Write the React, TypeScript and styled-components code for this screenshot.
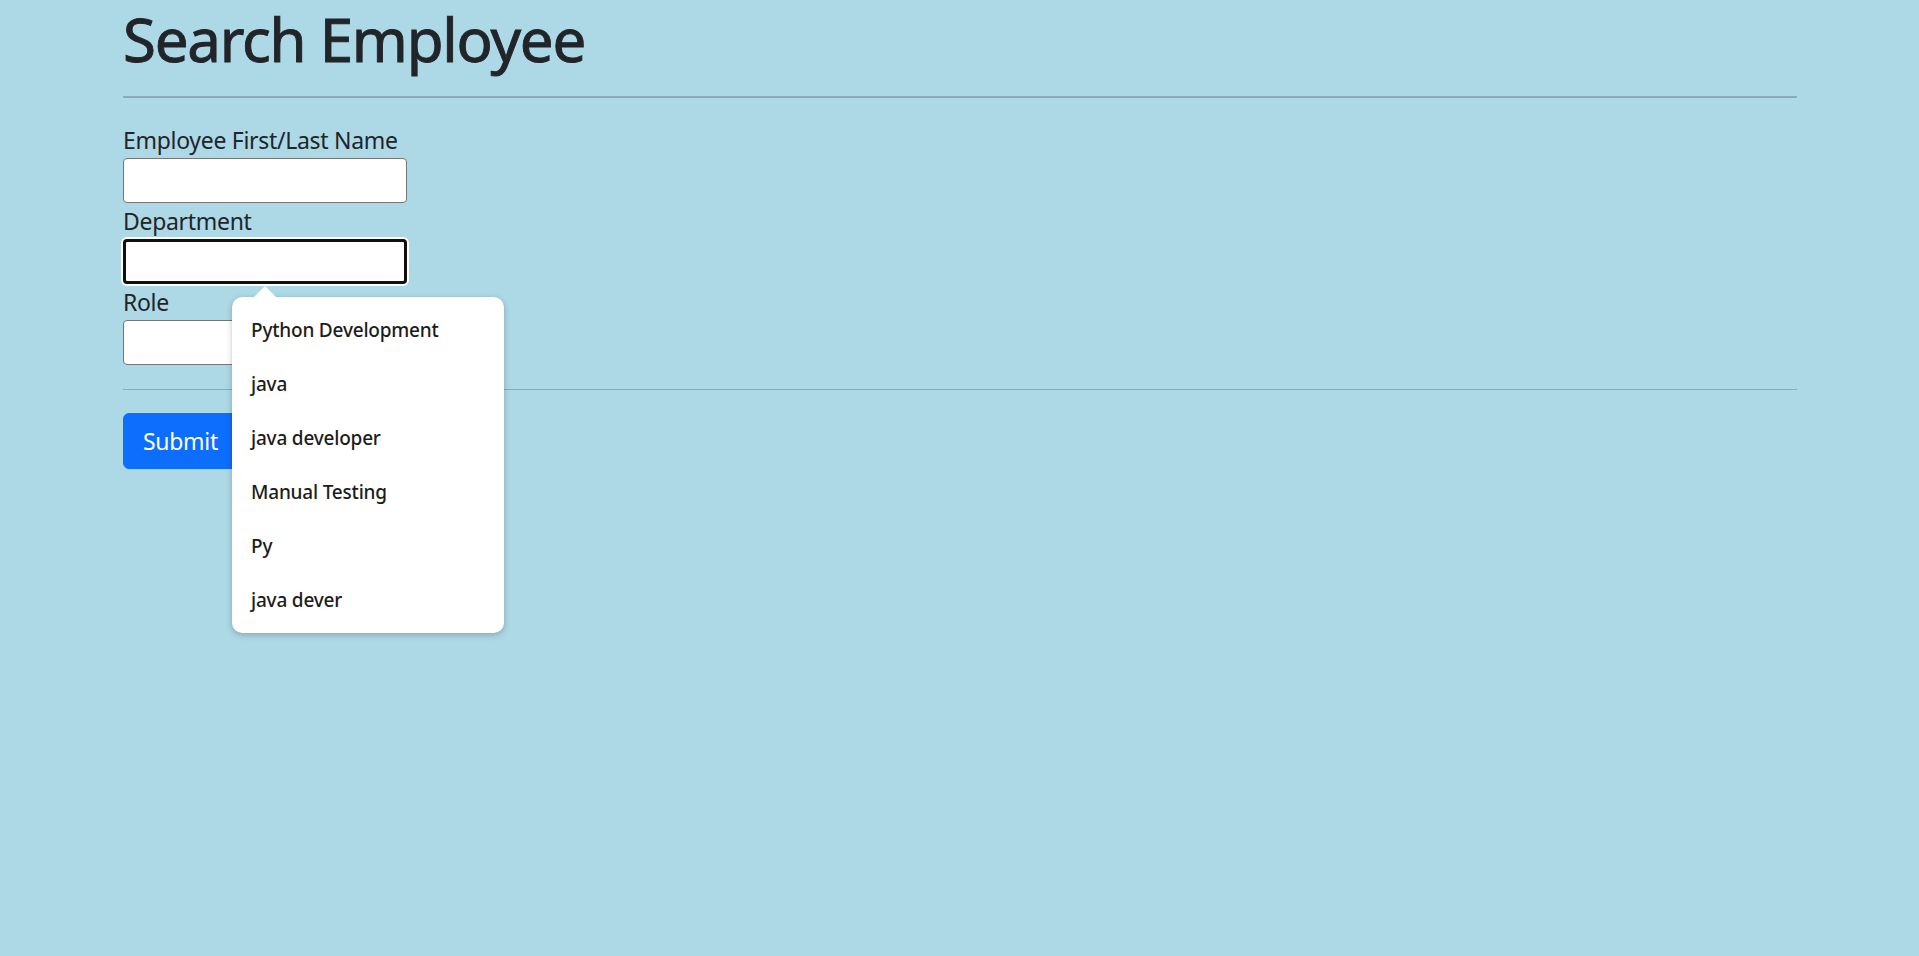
import React from "react";
import styled, { createGlobalStyle } from "styled-components";

const GlobalStyle = createGlobalStyle`
  html, body {
    margin: 0;
    padding: 0;
    background: #add8e6;
  }
  body {
    font-family: "Noto Sans", "Open Sans", "DejaVu Sans", sans-serif;
    color: #212529;
    min-height: 956px;
  }
  * { box-sizing: border-box; }
`;

const Page = styled.main`
  padding: 0 122px 0 123px;
`;

const Title = styled.h1`
  margin: 0;
  font-size: 60px;
  line-height: 78px;
  font-weight: 400;
  letter-spacing: -1.25px;
  color: #212529;
  -webkit-text-stroke: 0.9px #212529;
`;

const Rule = styled.hr<{ $thick?: boolean }>`
  margin: ${(p) => (p.$thick ? "18px 0 24px" : "24px 0 23px")};
  border: 0;
  height: ${(p) => (p.$thick ? "2px" : "1px")};
  background: #8aabb7;
`;

const Form = styled.form`
  display: flex;
  flex-direction: column;
  align-items: flex-start;
`;

const Field = styled.div`
  position: relative;
  display: flex;
  flex-direction: column;
  align-items: flex-start;
`;

const Label = styled.label`
  font-size: 23px;
  letter-spacing: -0.3px;
  line-height: 36px;
  height: 36px;
  color: #212529;
`;

const Input = styled.input<{ $focused?: boolean }>`
  width: 284px;
  height: 45px;
  margin: 0;
  background: #fff;
  border: ${(p) => (p.$focused ? "3px solid #101010" : "1px solid #767676")};
  border-radius: 4px;
  outline: none;
  box-shadow: ${(p) => (p.$focused ? "0 0 0 2px #ffffff" : "none")};
  font-size: 20px;
  font-family: inherit;
`;

const Button = styled.button`
  height: 56px;
  padding: 0 19px;
  border: 1px solid #0d6efd;
  border-radius: 6px;
  background: #0d6efd;
  color: #fff;
  font-family: inherit;
  font-size: 23px;
  letter-spacing: -0.3px;
  line-height: 36px;
`;

const Popup = styled.ul`
  position: absolute;
  left: 109px;
  top: 94px;
  width: 272px;
  margin: 0;
  padding: 6px 0;
  list-style: none;
  background: #fff;
  border-radius: 10px;
  box-shadow: 0 2px 6px rgba(0, 0, 0, 0.22), 0 0 1px rgba(0, 0, 0, 0.15);
  z-index: 10;

  &::before {
    content: "";
    position: absolute;
    left: 21px;
    top: -11px;
    width: 0;
    height: 0;
    border-left: 12px solid transparent;
    border-right: 12px solid transparent;
    border-bottom: 12px solid #fff;
  }
`;

const Option = styled.li`
  height: 54px;
  display: flex;
  align-items: center;
  padding-left: 19px;
  font-size: 19px;
  letter-spacing: -0.2px;
  font-weight: 500;
  color: #1c1c1c;
`;

const options = [
  "Python Development",
  "java",
  "java developer",
  "Manual Testing",
  "Py",
  "java dever",
];

export default function App() {
  return (
    <>
      <GlobalStyle />
      <Page>
        <Title>Search Employee</Title>
        <Rule $thick />
        <Form onSubmit={(e) => e.preventDefault()}>
          <Field>
            <Label htmlFor="name">Employee First/Last Name</Label>
            <Input id="name" type="text" />
          </Field>
          <Field>
            <Label htmlFor="dept">Department</Label>
            <Input id="dept" type="text" $focused />
            <Popup>
              {options.map((o) => (
                <Option key={o}>{o}</Option>
              ))}
            </Popup>
          </Field>
          <Field>
            <Label htmlFor="role">Role</Label>
            <Input id="role" type="text" />
          </Field>
        </Form>
        <Rule />
        <Button type="submit">Submit</Button>
      </Page>
    </>
  );
}
